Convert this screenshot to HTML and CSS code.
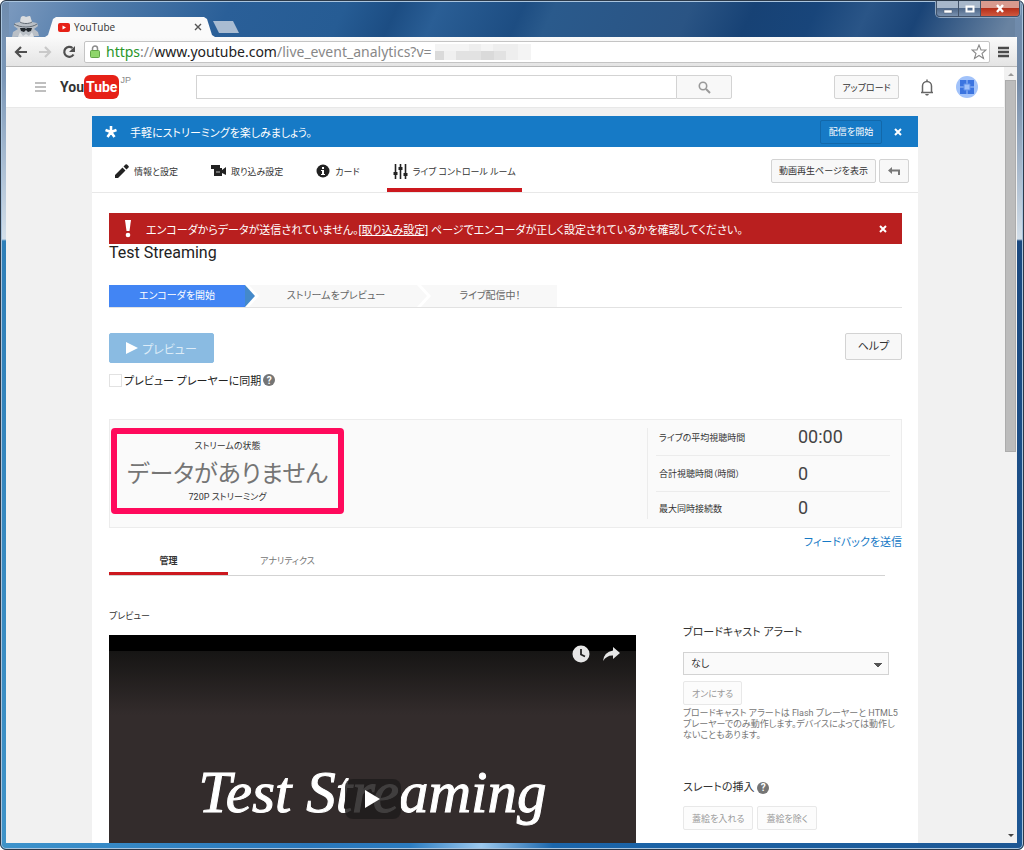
FILE: index.html
```html
<!DOCTYPE html>
<html lang="ja">
<head>
    <meta charset="UTF-8">
    <meta name="viewport" content="width=device-width, initial-scale=1.0">
    <title>YouTube</title>
    <link rel="stylesheet" href="styles.css">
</head>
<body>
<div class="window">
    <div class="titlebar">
        <svg class="incognito" width="28" height="22" viewBox="0 0 28 22">
            <path d="M1 22l1-5 5-3-4-3 1-3 5-1 1-5 3-1 2 1 4-1 2 6 5 1 1 3-4 3 4 3 1 4z" fill="#b9bfc6"/>
            <path d="M9 7c3 2 9 2 12 0l-2-6-4 1-3-1-2 1z" fill="#d9dcdf"/>
            <path d="M3 9c6 4 18 4 23 0M9 7c3 2 9 2 12 0" fill="none" stroke="#616a73"/>
            <path d="M9 13h5l1 1 1-1h5l-1 3-3 1-2-2-2 2-3-1z" fill="#22282e"/>
            <path d="M9 17l3 4 3-2 3 2 3-4 2 5H7z" fill="#dfe2e5"/>
        </svg>
        <div class="tab">
            <svg width="12" height="9" viewBox="0 0 12 9"><rect width="12" height="9" rx="2" fill="#e62117"/><path d="M4.500 2.500v4l3.500-2z" fill="#fff"/></svg>
            <span class="tab-title">YouTube</span>
            <button class="plain" aria-label="タブを閉じる"><svg width="8" height="8" viewBox="0 0 8 8"><path d="M1 1l6 6M7 1L1 7" stroke="#555" stroke-width="1.400"/></svg></button>
        </div>
        <button class="new-tab" aria-label="新しいタブ"></button>
        <div class="window-buttons">
            <button aria-label="最小化"><svg width="10" height="10" viewBox="0 0 10 10"><path d="M1 6h8v3H1z" fill="#fff" stroke="#4a5a70" stroke-width=".5"/></svg></button>
            <button aria-label="最大化"><svg width="10" height="8" viewBox="0 0 10 8"><rect x="1.500" y="1.500" width="7" height="5" fill="none" stroke="#fff" stroke-width="2"/></svg></button>
            <button class="close-window" aria-label="閉じる"><svg width="10" height="9" viewBox="0 0 10 9"><path d="M2 1l6 7M8 1L2 8" stroke="#fff" stroke-width="2.400"/></svg></button>
        </div>
    </div>

    <div class="browser">
        <div class="toolbar">
            <button class="plain" aria-label="戻る"><svg width="14" height="14" viewBox="0 0 14 14"><path d="M13 7H2M7 2L2 7l5 5" fill="none" stroke="#4f4f4f" stroke-width="2.200"/></svg></button>
            <button class="plain" aria-label="進む"><svg width="14" height="14" viewBox="0 0 14 14"><path d="M1 7h11M7 2l5 5-5 5" fill="none" stroke="#c9c9c9" stroke-width="2.200"/></svg></button>
            <button class="plain" aria-label="再読み込み"><svg width="14" height="14" viewBox="0 0 14 14"><path d="M11.500 9.500A5 5 0 1 1 10.500 3" fill="none" stroke="#4f4f4f" stroke-width="2.200"/><path d="M13 1v6H7z" fill="#4f4f4f"/></svg></button>
            <div class="address">
                <svg width="10" height="13" viewBox="0 0 10 13"><path d="M2.500 7V3.500a2.500 2.500 0 0 1 5 0V7" fill="none" stroke="#8c8c8c" stroke-width="1.500"/><rect x=".5" y="5.500" width="9" height="7" rx="1" fill="#8fd66b" stroke="#63a548"/></svg>
                <div class="url" role="textbox" aria-label="アドレス"><span class="scheme">https</span>://<span class="host">www.youtube.com</span>/live_event_analytics?v=</div>
                <svg class="mosaic" width="96" height="16" viewBox="0 0 96 16">
                    <path d="M0 0h96v16H0z" fill="#f4f4f4"/>
                    <path d="M34 0h12v7H34zM58 0h25v16H58z" fill="#eee"/>
                    <path d="M21 7h50v9H21z" fill="#e2e2e2"/>
                    <path d="M0 7h9v9H0zM46 7h13v9H46z" fill="#dadada"/>
                    <path d="M9 7h12v9H9z" fill="#f0f0f0"/>
                </svg>
                <button class="plain star" aria-label="ブックマーク"><svg width="16" height="16" viewBox="0 0 16 16"><path d="M8 1l2 5h5l-4 3.500 1.500 5L8 11.500l-4.500 3 1.500-5L1 6h5z" fill="#fff" stroke="#8a8a8a" stroke-width="1.100"/></svg></button>
            </div>
            <button class="plain" aria-label="メニュー"><svg width="12" height="12" viewBox="0 0 12 12"><path d="M0 2h11M0 6h11M0 10h11" stroke="#4b4b4b" stroke-width="2.400"/></svg></button>
        </div>

        <div class="viewport">
            <div class="page">
                <header class="masthead">
                    <button class="plain" aria-label="ガイド"><svg width="12" height="10" viewBox="0 0 12 10"><path d="M0 1h11M0 5h11M0 9h11" stroke="#aaa" stroke-width="1.500"/></svg></button>
                    <a class="logo" href="#"><span>You</span><span class="tube">Tube</span><sup>JP</sup></a>
                    <form class="search">
                        <input type="text" aria-label="検索">
                        <button type="button" aria-label="検索する"><svg width="13" height="13" viewBox="0 0 13 13"><circle cx="5" cy="5" r="3.700" fill="none" stroke="#999" stroke-width="1.600"/><path d="M8 8l4 4" stroke="#999" stroke-width="2"/></svg></button>
                    </form>
                    <button class="btn upload">アップロード</button>
                    <button class="plain bell" aria-label="通知"><svg width="14" height="17" viewBox="0 0 14 17"><path d="M1 13.500h12M2.500 13V7a4.500 4.500 0 0 1 9 0v6M7 .5v2" fill="none" stroke="#666" stroke-width="1.500"/><path d="M5 15h4l-1 1.500H6z" fill="#666"/></svg></button>
                    <a class="avatar" href="#" aria-label="アカウント"><svg width="22" height="22" viewBox="0 0 22 22"><circle cx="11" cy="11" r="11" fill="#a1c2fa"/><path d="M4 4h14v14H4z" fill="#3b74e0"/><path d="M11 4v14M4 11h14" stroke="#a1c2fa"/><path d="M8 8h6v6H8z" fill="#a1c2fa" stroke="#5e90ea"/></svg></a>
                </header>

                <main class="content">
                    <div class="promo">
                        <svg width="12" height="12" viewBox="0 0 12 12"><path d="M6 6V0M6 6l5.500-2M6 6l3.500 5M6 6l-3.500 5M6 6L.5 4" stroke="#fff" stroke-width="2.600"/></svg>
                        <span class="promo-text">手軽にストリーミングを楽しみましょう。</span>
                        <button class="promo-start">配信を開始</button>
                        <button class="plain dismiss" aria-label="閉じる"><svg width="8" height="8" viewBox="0 0 8 8"><path d="M1 1l6 6M7 1L1 7" stroke="#fff" stroke-width="2"/></svg></button>
                    </div>

                    <div class="panel">
                        <nav class="nav">
                            <a href="#"><svg width="14" height="14" viewBox="0 0 14 14"><path d="M0 14v-3l7.500-7.500 3 3L3 14zM8.500 2.500L10.500.5q.8-.6 1.500 0L13.500 2q.6.700 0 1.500l-2 2z" fill="#222"/></svg>情報と設定</a>
                            <a href="#"><svg width="15" height="12" viewBox="0 0 15 12"><path d="M0 0h9v3h2v2l4-3v8l-4-2v3H3V4H0z" fill="#222"/><path d="M5 7h4" stroke="#bbb"/></svg>取り込み設定</a>
                            <a href="#"><svg width="14" height="14" viewBox="0 0 14 14"><circle cx="7" cy="7" r="6.500" fill="#222"/><path d="M6 3h2v2H6zM5 6h3v4h1v1H5v-1h1V7H5z" fill="#fff"/></svg>カード</a>
                            <a href="#" class="active"><svg width="15" height="15" viewBox="0 0 15 15"><path d="M2.500 0v15M7.500 0v15M12.500 0v15" stroke="#222" stroke-width="1.600"/><path d="M.5 8h4v3h-4zM5.500 3h4v3h-4zM10.500 9h4v3h-4z" fill="#222"/></svg>ライブ コントロール ルーム</a>
                            <div class="nav-actions">
                                <button class="btn">動画再生ページを表示</button>
                                <button class="btn back" aria-label="戻る"><svg width="12" height="8" viewBox="0 0 12 8"><path d="M4 0v2.500h8V8h-2V4.500H4V7L0 3.500z" fill="#777"/></svg></button>
                            </div>
                        </nav>

                        <div class="body">
                            <div class="alert">
                                <svg width="8" height="18" viewBox="0 0 8 18"><path d="M1 0h6L5.500 11h-3z" fill="#fff"/><circle cx="4" cy="15" r="2.300" fill="#fff"/></svg>
                                <p>エンコーダからデータが送信されていません。<a href="#">[取り込み設定]</a> ページでエンコーダが正しく設定されているかを確認してください。</p>
                                <button class="plain dismiss" aria-label="閉じる"><svg width="8" height="8" viewBox="0 0 8 8"><path d="M1 1l6 6M7 1L1 7" stroke="#fff" stroke-width="2"/></svg></button>
                            </div>
                            <h1>Test Streaming</h1>

                            <ol class="steps">
                                <li class="current">エンコーダを開始</li>
                                <li class="next">ストリームをプレビュー</li>
                                <li class="last">ライブ配信中！</li>
                            </ol>

                            <div class="controls">
                                <button class="preview-btn" disabled><svg width="12" height="12" viewBox="0 0 12 12"><path d="M0 0l12 6-12 6z" fill="#fff"/></svg>プレビュー</button>
                                <button class="btn help">ヘルプ</button>
                            </div>
                            <div class="sync">
                                <input type="checkbox" id="sync">
                                <label for="sync">プレビュー プレーヤーに同期</label>
                                <span class="hint">?</span>
                            </div>

                            <section class="stats">
                                <div class="status">
                                    <div class="small">ストリームの状態</div>
                                    <div class="status-value">データがありません</div>
                                    <div class="small">720P ストリーミング</div>
                                </div>
                                <table class="figures">
                                    <tr class="first"><th scope="row">ライブの平均視聴時間</th><td>00:00</td></tr>
                                    <tr><th scope="row">合計視聴時間（時間）</th><td>0</td></tr>
                                    <tr class="final"><th scope="row">最大同時接続数</th><td>0</td></tr>
                                </table>
                            </section>
                            <div class="feedback"><a href="#">フィードバックを送信</a></div>

                            <div class="tabs">
                                <a href="#" class="selected">管理</a>
                                <a href="#">アナリティクス</a>
                            </div>

                            <div class="columns">
                                <section class="player-col">
                                    <h2>プレビュー</h2>
                                    <div class="player">
                                        <div class="player-icons">
                                            <button class="plain" aria-label="後で見る"><svg width="18" height="18" viewBox="0 0 18 18"><circle cx="9" cy="9" r="8.500" fill="#e6e6e6"/><path d="M9 4v5.500l4 2" fill="none" stroke="#222" stroke-width="1.800"/></svg></button>
                                            <button class="plain" aria-label="共有"><svg width="17" height="14" viewBox="0 0 17 14"><path d="M10 0l7 6-7 6V8.500Q4 8 0 14 1 5 10 3.500z" fill="#e6e6e6"/></svg></button>
                                        </div>
                                        <div class="slide">Test Streaming</div>
                                        <button class="play" aria-label="再生"><svg width="15" height="18" viewBox="0 0 15 18"><path d="M0 0l15 9-15 9z" fill="#fff"/></svg></button>
                                    </div>
                                </section>
                                <aside class="side">
                                    <h3><label for="broadcast">ブロードキャスト アラート</label></h3>
                                    <select id="broadcast"><option>なし</option></select>
                                    <div><button class="btn off" disabled>オンにする</button></div>
                                    <p>ブロードキャスト アラートは Flash プレーヤーと HTML5<br>プレーヤーでのみ動作します。デバイスによっては動作し<br>ないこともあります。</p>
                                    <h3 class="slate">スレートの挿入 <span class="hint">?</span></h3>
                                    <div class="slate-buttons">
                                        <button class="btn off" disabled>蓋絵を入れる</button>
                                        <button class="btn off" disabled>蓋絵を除く</button>
                                    </div>
                                </aside>
                            </div>
                        </div>
                    </div>
                </main>
            </div>
            <div class="scrollbar">
                <svg width="8" height="5" viewBox="0 0 8 5"><path d="M1 4h6L4 1z" fill="#9a9a9a"/></svg>
                <div class="thumb"></div>
                <svg width="8" height="5" viewBox="0 0 8 5"><path d="M1 1h6L4 4z" fill="#444"/></svg>
            </div>
        </div>
    </div>
</div>
</body>
</html>
```
FILE: styles.css
```css
* {
    box-sizing: border-box;
}
body {
    margin: 0;
    font-family: Roboto, "Noto Sans CJK JP", sans-serif;
    font-size: 11px;
    color: #333;
    font-feature-settings: "palt";
}
button, input, select {
    font: inherit;
    font-feature-settings: inherit;
    color: inherit;
}
h1, h2, h3, p, ol {
    margin: 0;
    padding: 0;
    font-weight: normal;
}
svg {
    display: block;
    flex-shrink: 0;
}
.plain {
    border: none;
    background: none;
    padding: 0;
}

/* window frame */
.window {
    display: flex;
    flex-direction: column;
    height: 100vh;
    overflow: hidden;
    border: 1px solid #2c3a4a;
    border-radius: 6px;
    box-shadow: inset 0 0 0 1px #a9c4de;
    background:
        linear-gradient(#6f8cae, #7c98b8 80px, #d3dfea 238px, #2f7fb8 240px, #3f93c8) left / 8px 100% no-repeat,
        linear-gradient(#6f8cae, #7289a6 80px, #d3dfea 238px, #1c4a80 240px, #1d5794) right / 8px 100% no-repeat,
        linear-gradient(90deg, #3d93cc, #2a78bb 30%, #2b7cc0 40%, #9cc9ee 47%, #1b66ab 54%, #1d5794) bottom / 100% 8px no-repeat,
        linear-gradient(115deg, #7f9cc0, #4f7aa9 10%, #2a5f98 22%, #265c94 33%, #1c4d83 38%, #2a5e95 42%, #1d4d82 50%, #2a5a8c 53%, #2a5484 66%, #174275 72%, #18457a 78%, #2a5587 83%, #1a4477 88%, #6983a1 97%) top / 100% 60px no-repeat,
        #1d5794;
}
.titlebar {
    display: flex;
    align-items: flex-end;
    height: 36px;
    padding: 0 3px 0 10px;
}
.tab {
    display: flex;
    align-items: center;
    gap: 4px;
    width: 170px;
    height: 20px;
    margin-left: 6px;
    padding: 0 13px;
    background: #fafafa;
    clip-path: polygon(0 100%, 3px 90%, 8px 10%, 11px 0, calc(100% - 11px) 0, calc(100% - 8px) 10%, calc(100% - 3px) 90%, 100% 100%);
}
.tab-title {
    flex: 1;
    font-family: "Open Sans", sans-serif;
    font-size: 10px;
}
.new-tab {
    width: 26px;
    height: 12px;
    margin: 0 0 4px -2px;
    border: none;
    background: #a9bcd2;
    clip-path: polygon(0 0, 20px 0, 26px 100%, 6px 100%);
}
.window-buttons {
    display: flex;
    align-self: flex-start;
    margin-left: auto;
    border: 1px solid #42536a;
    border-top: none;
    border-radius: 0 0 4px 4px;
    overflow: hidden;
    box-shadow: 0 0 0 1px #8fa6c0;
}
.window-buttons button {
    display: flex;
    align-items: center;
    justify-content: center;
    width: 22px;
    height: 15px;
    padding: 0;
    border: none;
    border-right: 1px solid #42536a;
    background: linear-gradient(#a7b7ca 45%, #50698a 50%, #7890ae);
}
.window-buttons .close-window {
    width: 38px;
    border: none;
    background: linear-gradient(#d99a8e 45%, #b5301b 50%, #d0583e);
}

.browser {
    display: flex;
    flex-direction: column;
    flex: 1;
    min-height: 0;
    margin: 0 6px 6px 5px;
    background: #fff;
}
.toolbar {
    display: flex;
    align-items: center;
    gap: 10px;
    height: 30px;
    padding: 0 7px 0 8px;
    background: linear-gradient(#fafafa, #e4e4e4);
    border-bottom: 1px solid #b8b8b8;
    border-radius: 3px 3px 0 0;
}
.address {
    display: flex;
    align-items: center;
    flex: 1;
    height: 22px;
    margin: 0 -2px;
    padding: 0 2px 0 5px;
    background: #fff;
    border: 1px solid #c4c4c4;
    border-radius: 2px;
}
.url {
    margin-left: 6px;
    font-family: "Noto Sans", sans-serif;
    font-size: 14px;
    line-height: 20px;
    color: #888;
}
.mosaic {
    margin-left: 3px;
}
.scheme {
    color: #2a962a;
}
.host {
    color: #222;
}
.star {
    margin-left: auto;
}

.viewport {
    display: flex;
    flex: 1;
    min-height: 0;
}
.page {
    flex: 1;
    min-width: 0;
    overflow: hidden;
    background: #f1f1f1;
}
.scrollbar {
    display: flex;
    flex-direction: column;
    align-items: center;
    width: 13px;
    padding: 5px 0;
    background: #f1f1f1;
}
.thumb {
    width: 11px;
    height: 372px;
    margin: 3px 0 auto;
    background: #bcbcbc;
    border: 1px solid #acacac;
}

/* masthead */
.masthead {
    display: flex;
    align-items: center;
    height: 41px;
    padding: 0 26px 0 29px;
    background: #fff;
    border-bottom: 1px solid #e8e8e8;
}
.logo {
    display: flex;
    align-items: center;
    width: 71px;
    margin-left: 13px;
    font-weight: bold;
    font-size: 14px;
    line-height: 24px;
    color: #333;
    text-decoration: none;
}
.tube {
    padding: 0 2px;
    border-radius: 6px;
    background: #e62117;
    color: #fff;
}
.logo sup {
    align-self: flex-start;
    margin-left: 1px;
    font: 9px/10px "Liberation Sans", sans-serif;
    color: #888;
}
.search {
    display: flex;
    flex: 1;
    height: 24px;
    max-width: 536px;
    margin-left: 65px;
}
.search input {
    flex: 1;
    min-width: 0;
    border: 1px solid #d3d3d3;
    border-right: none;
}
.search button {
    display: flex;
    align-items: center;
    justify-content: center;
    width: 56px;
    border: 1px solid #d3d3d3;
    border-radius: 0 2px 2px 0;
    background: #f8f8f8;
}
.btn {
    height: 24px;
    padding: 0 7px;
    border: 1px solid #d3d3d3;
    border-radius: 2px;
    background: #f8f8f8;
    font-size: 9px;
    color: #333;
}
.upload {
    width: 65px;
    padding: 0;
    margin-left: auto;
}
.bell {
    margin: 0 22px 0 21px;
}

/* content */
.content {
    max-width: 826px;
    margin: 8px auto 0;
}
.promo {
    display: flex;
    align-items: center;
    height: 31px;
    padding: 0 16px 0 13px;
    background: #167ac6;
    color: #fff;
}
.promo-text {
    flex: 1;
    margin-left: 13px;
}
.promo-start {
    width: 62px;
    height: 24px;
    margin-right: 12px;
    padding: 0;
    border: 1px solid #1268aa;
    border-radius: 2px;
    background: #167ac6;
    font-size: 9px;
}
.panel {
    background: #fff;
    min-height: 720px;
}
.nav {
    display: flex;
    gap: 21px;
    height: 46px;
    padding: 0 9px 0 17px;
    border-bottom: 1px solid #e8e8e8;
    font-size: 9px;
}
.nav > a {
    display: flex;
    align-items: center;
    gap: 5px;
    padding: 7px 6px 0;
    border-bottom: 4px solid transparent;
    color: #333;
    text-decoration: none;
}
.nav > .active {
    border-color: #cc181e;
}
.nav-actions {
    display: flex;
    align-items: center;
    gap: 3px;
    margin-left: auto;
    padding-top: 2px;
}
.back {
    padding: 0 8px;
}
.body {
    padding: 20px 16px 0 17px;
}
.alert {
    display: flex;
    align-items: center;
    height: 31px;
    padding: 0 15px;
    background: #b91f1f;
    color: #fff;
}
.alert p {
    flex: 1;
    margin-left: 14px;
}
.alert a {
    color: #fff;
}
h1 {
    font-size: 16px;
    line-height: 18px;
    color: #222;
}

.steps {
    display: flex;
    margin-top: 23px;
    border-bottom: 1px solid #e2e2e2;
    list-style: none;
    font-size: 10px;
    line-height: 22px;
    text-align: center;
    color: #666;
}
.steps li {
    position: relative;
    background: #f8f8f8;
}
.steps .current {
    width: 136px;
    background: #4285f4;
    color: #fff;
}
.steps .next {
    width: 172px;
    padding-left: 10px;
}
.steps .last {
    width: 140px;
    padding-left: 6px;
}
/* arrow heads lie over the next step */
.current::before, .next::before,
.current::after, .next::after {
    content: "";
    position: absolute;
    z-index: 1;
    top: 0;
    left: 100%;
    width: 14px;
    height: 22px;
    background: #fff;
    clip-path: polygon(0 0, 4px 0, 100% 50%, 4px 100%, 0 100%);
}
.current::after, .next::after {
    width: 10px;
    background: #f8f8f8;
    clip-path: polygon(0 0, 100% 50%, 0 100%);
}
.current::after {
    background: #4489ca;
}

.controls {
    display: flex;
    align-items: flex-start;
    justify-content: space-between;
    margin-top: 25px;
}
.preview-btn {
    display: flex;
    align-items: center;
    justify-content: center;
    gap: 4px;
    width: 105px;
    height: 30px;
    border: 1px solid #8abbe2;
    border-radius: 2px;
    background: #8abbe2;
    font-size: 12px;
    color: #dcebf7;
}
.help {
    width: 57px;
    height: 27px;
    padding-bottom: 4px;
    font-size: 11px;
}
.sync {
    display: flex;
    align-items: center;
    gap: 2px;
    height: 16px;
    margin-top: 9px;
    color: #222;
}
.sync input {
    appearance: none;
    width: 13px;
    height: 13px;
    margin: 0;
    border: 1px solid #e2e2e2;
    background: #fff;
}
.hint {
    display: inline-flex;
    align-items: center;
    justify-content: center;
    width: 12px;
    height: 12px;
    border-radius: 50%;
    background: #757575;
    font-size: 10px;
    font-weight: bold;
    color: #fff;
}

.stats {
    display: flex;
    justify-content: space-between;
    margin-top: 31px;
    padding: 8px 11px 8px 1px;
    border: 1px solid #ececec;
    background: #fafafa;
}
.status {
    align-self: flex-start;
    width: 233px;
    padding: 5px 0 3px;
    border: 6px solid #ff0a5c;
    border-radius: 4px;
    text-align: center;
}
.small {
    font-size: 9px;
    line-height: 15px;
}
.status-value {
    padding-top: 4px;
    font-size: 24px;
    line-height: 32px;
    color: #757575;
}
.figures {
    width: 243px;
    padding-left: 8px;
    border-left: 1px solid #ececec;
    border-spacing: 0;
}
.figures th, .figures td {
    height: 36px;
    padding: 0 3px;
    border-bottom: 1px solid #ececec;
    text-align: left;
}
.figures th {
    width: 139px;
    font-size: 9px;
    font-weight: normal;
}
.figures td {
    font-size: 18px;
    line-height: 18px;
    color: #444;
}
.figures .first > * {
    height: 28px;
    padding-bottom: 9px;
}
.figures .final > * {
    height: 27px;
    padding-top: 5px;
    border-bottom: none;
}
.feedback {
    margin-top: 6px;
    text-align: right;
    line-height: 18px;
}
.feedback a {
    color: #167ac6;
    text-decoration: none;
}

.tabs {
    display: flex;
    height: 24px;
    margin-right: 17px;
    border-bottom: 1px solid #d3d3d3;
    font-size: 9px;
    text-align: center;
}
.tabs a {
    width: 119px;
    line-height: 18px;
    color: #767676;
    text-decoration: none;
}
.tabs .selected {
    border-bottom: 3px solid #cc181e;
    font-weight: bold;
    color: #333;
}

.columns {
    display: flex;
    gap: 47px;
}
.player-col {
    flex: 1;
    min-width: 0;
}
h2 {
    margin: 32px 0 11px;
    font-size: 9px;
    line-height: 16px;
}
.player {
    display: grid;
    height: 311px;
    border-top: 16px solid #000;
    background: linear-gradient(#161514, #332c2c 64px);
}
.player > * {
    grid-area: 1 / 1;
}
.player-icons {
    display: flex;
    align-items: center;
    align-self: start;
    justify-self: end;
    gap: 13px;
    margin: -6px 16px 0 0;
}
.slide {
    align-self: center;
    justify-self: center;
    margin-bottom: 14px;
    font: italic 59px/64px "Liberation Serif", serif;
    -webkit-text-stroke: 1px #fff;
    color: #fff;
}
.play {
    display: flex;
    align-items: center;
    justify-content: center;
    align-self: center;
    justify-self: center;
    width: 56px;
    height: 40px;
    border: none;
    border-radius: 8px;
    background: rgba(30, 28, 28, 0.850);
}

.side {
    width: 219px;
    padding-top: 48px;
}
h3 {
    font-size: 11px;
    line-height: 18px;
}
.side select {
    appearance: none;
    display: block;
    width: 206px;
    height: 23px;
    margin: 10px 0 6px;
    padding: 0 7px;
    border: 1px solid #d3d3d3;
    border-radius: 0;
    background: conic-gradient(from -45deg at 50% 100%, #555 90deg, #fafafa 0) 190px 10px / 8px 4px no-repeat, #fafafa;
    font-size: 10px;
}
.off {
    padding: 0 8px;
    border-color: #e8e8e8;
    background: #fcfcfc;
    color: #999;
}
.side p {
    margin-top: 3px;
    font-size: 9px;
    line-height: 11px;
    color: #767676;
    white-space: nowrap;
}
.slate {
    margin: 38px 0 9px;
}
.slate-buttons {
    display: flex;
    gap: 4px;
}
```
